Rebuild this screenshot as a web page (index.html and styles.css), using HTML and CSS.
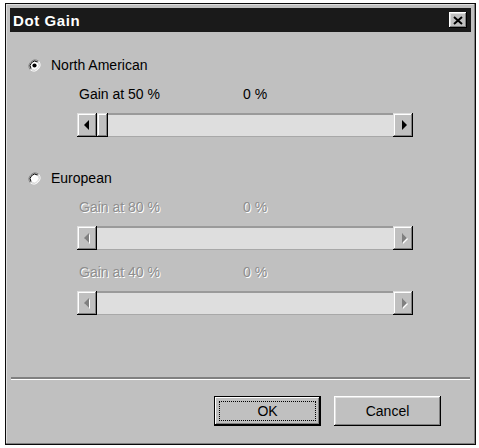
FILE: index.html
```html
<!DOCTYPE html>
<html>
<head>
<meta charset="utf-8">
<link rel="stylesheet" href="styles.css">
</head>
<body>
<div class="window">
  <div class="titlebar">
    <span class="title">Dot Gain</span>
    <span class="close"><svg width="10" height="9" viewBox="0 0 10 9"><path d="M1 1 L9 8 M9 1 L1 8" stroke="#000" stroke-width="2" fill="none"/></svg></span>
  </div>
  <div class="content">
    <div class="group">
      <div class="radio">
        <svg class="dot" width="13" height="13" viewBox="0 0 13 13">
          <path d="M2.3 10.7 A6 6 0 0 1 10.7 2.3" stroke="#808080" stroke-width="1" fill="none"/>
          <path d="M10.7 2.3 A6 6 0 0 1 2.3 10.7" stroke="#fff" stroke-width="1" fill="none"/>
          <circle cx="6.5" cy="6.5" r="4.6" fill="#fff"/>
          <path d="M3.2 9.8 A4.7 4.7 0 0 1 9.8 3.2" stroke="#000" stroke-width="1" fill="none"/>
          <path d="M9.8 3.2 A4.7 4.7 0 0 1 3.2 9.8" stroke="#dfdfdf" stroke-width="1" fill="none"/>
          <circle cx="6.5" cy="6.5" r="2.1" fill="#000"/>
        </svg>
        <span>North American</span>
      </div>
      <div class="param">
        <div class="labels"><span class="name">Gain at 50 %</span><span>0 %</span></div>
        <div class="scrollbar">
          <span class="sbtn"><span class="arrow left"></span></span>
          <span class="thumb"></span>
          <span class="track"></span>
          <span class="sbtn"><span class="arrow right"></span></span>
        </div>
      </div>
    </div>
    <div class="group">
      <div class="radio">
        <svg class="dot" width="13" height="13" viewBox="0 0 13 13">
          <path d="M2.3 10.7 A6 6 0 0 1 10.7 2.3" stroke="#808080" stroke-width="1" fill="none"/>
          <path d="M10.7 2.3 A6 6 0 0 1 2.3 10.7" stroke="#fff" stroke-width="1" fill="none"/>
          <circle cx="6.5" cy="6.5" r="4.6" fill="#fff"/>
          <path d="M3.2 9.8 A4.7 4.7 0 0 1 9.8 3.2" stroke="#000" stroke-width="1" fill="none"/>
          <path d="M9.8 3.2 A4.7 4.7 0 0 1 3.2 9.8" stroke="#dfdfdf" stroke-width="1" fill="none"/>
        </svg>
        <span>European</span>
      </div>
      <div class="param disabled">
        <div class="labels"><span class="name">Gain at 80 %</span><span>0 %</span></div>
        <div class="scrollbar">
          <span class="sbtn"><span class="arrow left"></span></span>
          <span class="track"></span>
          <span class="sbtn"><span class="arrow right"></span></span>
        </div>
        <div class="labels"><span class="name">Gain at 40 %</span><span>0 %</span></div>
        <div class="scrollbar">
          <span class="sbtn"><span class="arrow left"></span></span>
          <span class="track"></span>
          <span class="sbtn"><span class="arrow right"></span></span>
        </div>
      </div>
    </div>
  </div>
  <div class="separator"></div>
  <div class="buttons">
    <button class="btn default">OK</button>
    <button class="btn">Cancel</button>
  </div>
</div>
</body>
</html>
```
FILE: styles.css
```css
* { box-sizing: border-box; }
html, body { margin: 0; padding: 0; background: #fff; }
body {
  width: 479px;
  height: 448px;
  overflow: hidden;
  font-family: "Liberation Sans", Arial, sans-serif;
  font-size: 14px;
  color: #000;
}
.window {
  margin: 3px 0 0 5px;
  width: 471px;
  height: 442px;
  background: #c0c0c0;
  border: 1px solid #0a0a0a;
  box-shadow: inset -1px -1px #808080, inset 1px 1px #dfdfdf;
  padding: 4px;
  display: flex;
  flex-direction: column;
}
.titlebar {
  height: 24px;
  background: #1a1a1a;
  display: flex;
  align-items: center;
  justify-content: space-between;
  padding: 0 4px 0 3px;
}
.title {
  color: #fff;
  font-weight: bold;
  font-size: 15px;
  letter-spacing: 0.6px;
}
.close {
  width: 18px;
  height: 16px;
  background: #c0c0c0;
  box-shadow: inset -1px -1px #000, inset 1px 1px #fff, inset -2px -2px #808080, inset 2px 2px #dfdfdf;
  display: flex;
  align-items: center;
  justify-content: center;
}
.close svg { display: block; }
.content {
  flex: 1;
  padding: 24px 0 0 18px;
}
.group + .group { margin-top: 32px; }
.radio {
  display: flex;
  align-items: center;
  height: 18px;
  gap: 10px;
}
.dot { display: block; flex: none; }
.param { margin-left: 49px; }
.labels {
  display: flex;
  align-items: center;
  height: 18px;
  margin-top: 11px;
  padding-left: 2px;
}
.scrollbar + .labels { margin-top: 13px; }
.labels .name { width: 164px; }
.scrollbar {
  display: flex;
  width: 336px;
  height: 24px;
  margin-top: 10px;
}
.sbtn {
  width: 20px;
  height: 24px;
  background: #c0c0c0;
  box-shadow: inset -1px -1px #000, inset 1px 1px #dfdfdf, inset -2px -2px #808080, inset 2px 2px #fff;
  display: flex;
  align-items: center;
  justify-content: center;
}
.thumb {
  width: 11px;
  height: 24px;
  background: #c0c0c0;
  box-shadow: inset -1px -1px #000, inset 1px 1px #dfdfdf, inset -2px -2px #808080, inset 2px 2px #fff;
}
.track {
  flex: 1;
  background: #dedede;
  border-top: 2px solid #9a9a9a;
  border-bottom: 1px solid #a8a8a8;
}
.arrow {
  width: 0;
  height: 0;
  border-top: 5px solid transparent;
  border-bottom: 5px solid transparent;
}
.arrow.left { border-right: 5px solid #000; margin-left: -2px; }
.arrow.right { border-left: 5px solid #000; margin-left: 2px; }
.disabled .labels {
  color: #8e8e8e;
  text-shadow: 1px 1px 0 #fff;
}
.disabled .arrow.left { border-right-color: #808080; filter: drop-shadow(1px 1px 0 #fff); }
.disabled .arrow.right { border-left-color: #808080; filter: drop-shadow(1px 1px 0 #fff); }
.separator {
  margin: 0 1px;
  border-top: 2px solid #808080;
  border-bottom: 1px solid #fff;
}
.buttons {
  display: flex;
  justify-content: flex-end;
  gap: 13px;
  padding: 16px 30px 14px 0;
}
.btn {
  position: relative;
  width: 107px;
  height: 30px;
  margin: 0;
  padding: 0;
  border: none;
  background: #c0c0c0;
  font-family: "Liberation Sans", Arial, sans-serif;
  font-size: 14px;
  color: #000;
  box-shadow: inset -1px -1px #000, inset 1px 1px #fff, inset -2px -2px #808080, inset 2px 2px #dfdfdf;
}
.btn.default {
  border: 1px solid #000;
  box-shadow: inset -1px -1px #000, inset 1px 1px #fff, inset -2px -2px #808080;
}
.btn.default::after {
  content: "";
  position: absolute;
  left: 4px;
  top: 4px;
  right: 4px;
  bottom: 4px;
  border: 1px dotted #000;
}
```
